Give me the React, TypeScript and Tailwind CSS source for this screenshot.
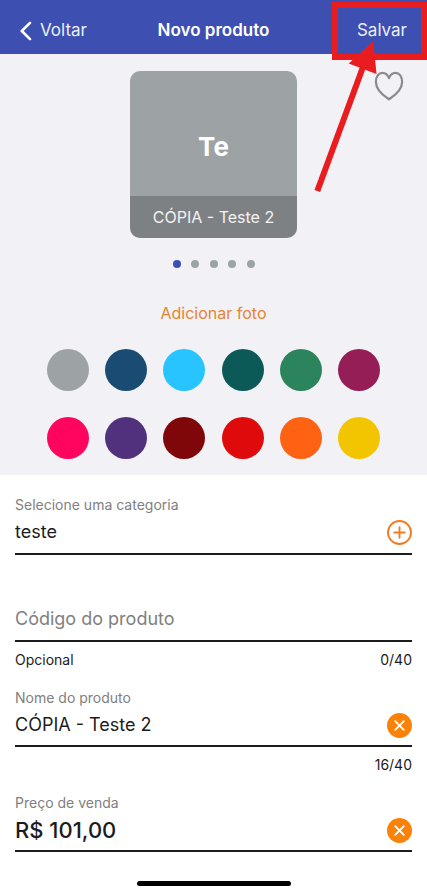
import { useState } from 'react';

const SWATCHES = [
  { name: 'Cinza', className: 'bg-[#9da2a5]' },
  { name: 'Azul-marinho', className: 'bg-[#194b73]' },
  { name: 'Azul-claro', className: 'bg-[#27c4ff]' },
  { name: 'Petróleo', className: 'bg-[#0b5a58]' },
  { name: 'Verde', className: 'bg-[#2c845c]' },
  { name: 'Vinho', className: 'bg-[#961e57]' },
  { name: 'Rosa', className: 'bg-[#ff0560]' },
  { name: 'Roxo', className: 'bg-[#51317d]' },
  { name: 'Bordô', className: 'bg-[#800709]' },
  { name: 'Vermelho', className: 'bg-[#df0a0b]' },
  { name: 'Laranja', className: 'bg-[#ff6213]' },
  { name: 'Amarelo', className: 'bg-[#f2c500]' },
];

const SLIDES = [1, 2, 3, 4, 5];

function IconBack() {
  return (
    <svg width="12" height="20" viewBox="0 0 12 20" fill="none" aria-hidden="true">
      <path d="M10 1.8 1.8 10l8.2 8.2" stroke="white" strokeWidth="2.6" strokeLinecap="round" strokeLinejoin="round" />
    </svg>
  );
}

function IconHeart() {
  return (
    <svg width="30" height="30" viewBox="0 0 30 30" fill="none" aria-hidden="true">
      <path
        d="M15 28.3C12.6 26.6 1.9 20.2 1.9 10.9 1.9 5.6 4.6 1.8 8.5 1.8c3 0 5.2 1.8 6.5 5.3 1.3-3.5 3.5-5.3 6.5-5.3 3.9 0 6.6 3.8 6.6 9.1 0 9.3-10.7 15.7-13.1 17.4Z"
        stroke="#8b8b8f"
        strokeWidth="2.2"
        strokeLinejoin="round"
      />
    </svg>
  );
}

function IconPlus() {
  return (
    <svg width="25" height="25" viewBox="0 0 25 25" fill="none" aria-hidden="true">
      <circle cx="12.5" cy="12.5" r="11.5" stroke="#ed7d24" strokeWidth="1.9" />
      <path d="M12.5 7.3v10.4M7.3 12.5h10.4" stroke="#ed7d24" strokeWidth="1.9" strokeLinecap="round" />
    </svg>
  );
}

function IconClear() {
  return (
    <svg width="25" height="25" viewBox="0 0 25 25" fill="none" aria-hidden="true">
      <circle cx="12.5" cy="12.5" r="12.5" fill="#fb8208" />
      <path d="m8.2 8.2 8.6 8.6M16.8 8.2l-8.6 8.6" stroke="white" strokeWidth="1.9" strokeLinecap="round" />
    </svg>
  );
}

function Highlight() {
  return (
    <div className="pointer-events-none absolute right-0 top-0">
      <svg width="127" height="200" viewBox="0 0 127 200" fill="none" aria-hidden="true">
        <rect x="35" y="5" width="89" height="52" stroke="#e91c1f" strokeWidth="6" />
        <path d="M17.3 191 63 67" stroke="#e91c1f" strokeWidth="6" />
        <path d="M73.3 41 76.5 74 48.7 63.5Z" fill="#e91c1f" />
      </svg>
    </div>
  );
}

function App() {
  const [category, setCategory] = useState('teste');
  const [code, setCode] = useState('');
  const [name, setName] = useState('CÓPIA - Teste 2');
  const [price, setPrice] = useState('R$ 101,00');
  const [color, setColor] = useState(SWATCHES[0].className);

  return (
    <div className="relative min-h-screen w-full bg-white font-['Inter','Liberation_Sans',sans-serif] text-[#1c1c1e]">
      <header className="grid h-[54px] grid-cols-[1fr_auto_1fr] items-center bg-[#3d50b1] px-5 pt-2 text-[17px] text-white">
        <button type="button" className="flex items-center gap-2 justify-self-start text-[#eceefa]">
          <IconBack />
          Voltar
        </button>
        <h1 className="font-semibold">Novo produto</h1>
        <button type="button" className="justify-self-end text-[#eceefa]">
          Salvar
        </button>
      </header>

      <section className="flex flex-col items-center bg-[#f1f1f6] pb-4 pt-[17px]">
        <div className="grid w-full grid-cols-[1fr_auto_1fr] items-start px-[23px]">
          <div className={`col-start-2 flex h-[167px] w-[167px] flex-col overflow-hidden rounded-[10px] ${color}`}>
            <div className="flex flex-1 items-center justify-center pt-[26px] text-[26px] font-bold text-white">Te</div>
            <div className="flex h-[42px] items-center justify-center bg-black/20 text-base text-[#f3f3f3]">{name}</div>
          </div>
          <button type="button" aria-label="Favoritar" className="justify-self-end">
            <IconHeart />
          </button>
        </div>

        <div className="mt-[22px] flex w-[82px] justify-between">
          {SLIDES.map((slide) => (
            <span key={slide} className={`h-2 w-2 rounded-full ${slide === 1 ? 'bg-[#3d50b1]' : 'bg-[#9da2a5]'}`} />
          ))}
        </div>

        <button type="button" className="mt-[33px] text-base leading-6 text-[#e58432]">
          Adicionar foto
        </button>

        <div className="mt-6 grid w-full grid-cols-[repeat(6,42px)] justify-between gap-y-[26px] px-[47px]">
          {SWATCHES.map((swatch) => (
            <button
              key={swatch.name}
              type="button"
              aria-label={swatch.name}
              onClick={() => setColor(swatch.className)}
              className={`h-[42px] w-[42px] rounded-full ${swatch.className}`}
            />
          ))}
        </div>
      </section>

      <form className="px-[15px] pt-5">
        <div>
          <label htmlFor="category" className="block text-sm leading-5 text-[#808080]">
            Selecione uma categoria
          </label>
          <div className="flex h-10 items-center border-b-2 border-[#1c1c1e] pb-1">
            <input
              id="category"
              value={category}
              onChange={(e) => setCategory(e.target.value)}
              className="min-w-0 flex-1 text-lg outline-none"
            />
            <button type="button" aria-label="Nova categoria">
              <IconPlus />
            </button>
          </div>
        </div>

        <div className="mt-[47px]">
          <div className="flex h-10 items-center border-b-2 border-[#1c1c1e] pb-1">
            <input
              aria-label="Código do produto"
              placeholder="Código do produto"
              value={code}
              onChange={(e) => setCode(e.target.value)}
              className="min-w-0 flex-1 text-lg outline-none placeholder:text-[#808080]"
            />
          </div>
          <div className="mt-2 flex justify-between text-sm leading-5">
            <span>Opcional</span>
            <span>0/40</span>
          </div>
        </div>

        <div className="mt-[18px]">
          <label htmlFor="name" className="block text-sm leading-5 text-[#808080]">
            Nome do produto
          </label>
          <div className="flex h-[39px] items-center border-b-2 border-[#1c1c1e] pb-[3px]">
            <input
              id="name"
              value={name}
              onChange={(e) => setName(e.target.value)}
              className="min-w-0 flex-1 text-lg outline-none"
            />
            <button type="button" aria-label="Limpar nome" onClick={() => setName('')}>
              <IconClear />
            </button>
          </div>
          <div className="mt-2 text-right text-sm leading-5">16/40</div>
        </div>

        <div className="mt-[18px]">
          <label htmlFor="price" className="block text-sm leading-5 text-[#808080]">
            Preço de venda
          </label>
          <div className="flex h-[39px] items-center border-b-2 border-[#1c1c1e] pb-[3px]">
            <input
              id="price"
              value={price}
              onChange={(e) => setPrice(e.target.value)}
              className="min-w-0 flex-1 text-[22px] font-medium outline-none"
            />
            <button type="button" aria-label="Limpar preço" onClick={() => setPrice('')}>
              <IconClear />
            </button>
          </div>
        </div>
      </form>

      <div className="flex justify-center pb-1 pt-[29px]">
        <div className="h-[5px] w-[154px] rounded-full bg-black" />
      </div>

      <Highlight />
    </div>
  );
}

export default App;
